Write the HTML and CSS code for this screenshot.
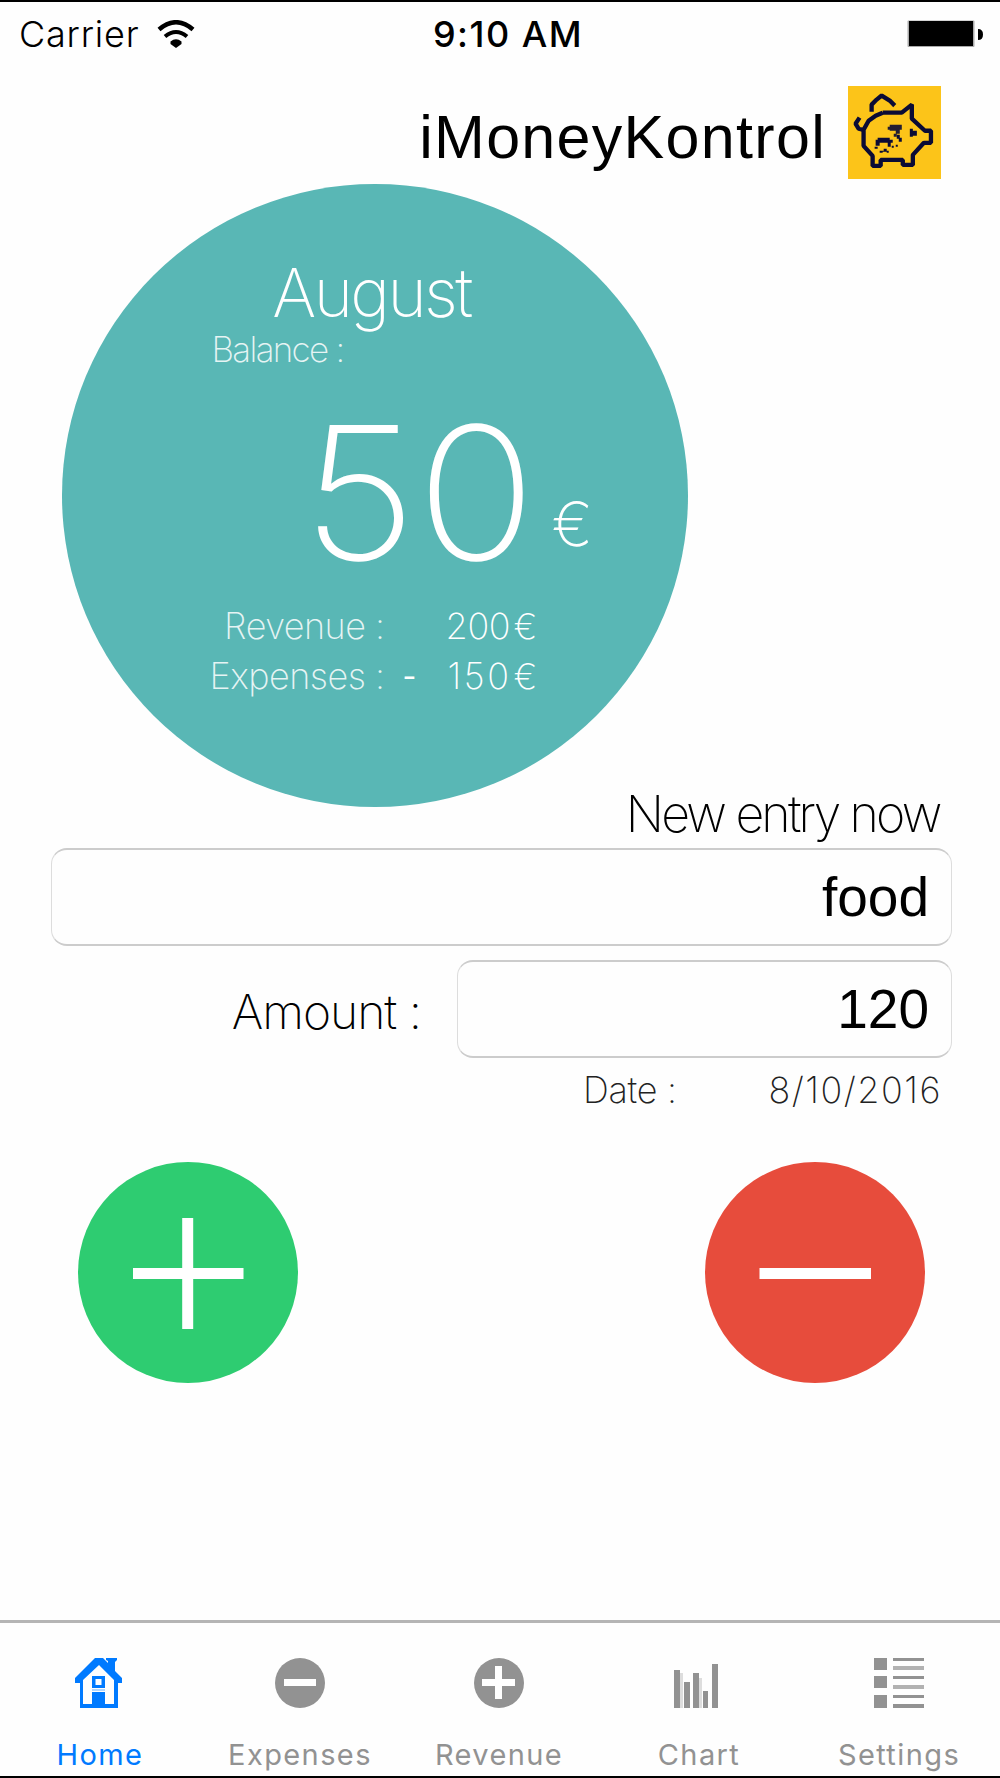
FILE: index.html
```html
<!DOCTYPE html>
<html lang="en">
<head>
<meta charset="utf-8">
<title>iMoneyKontrol</title>
<link rel="stylesheet" href="styles.css">
</head>
<body>
<div class="app">
  <div class="status">
    <div class="status-left">
      <span class="carrier">Carrier</span>
      <svg class="wifi" viewBox="0 0 38 28"><g fill="none" stroke="#000"><path d="M2 9.5Q19-5 36 9.5" stroke-width="4.500"/><path d="M8 16.500Q19 7.500 30 16.500" stroke-width="4"/></g><path d="M13.500 21.500Q19 17 24.500 21.500V24L19 28L13.500 24Z"/></svg>
    </div>
    <span class="time">9:10 AM</span>
    <svg class="battery" viewBox="0 0 76 28"><rect x=".5" y=".5" width="67" height="26.500" rx="1" fill="#aaa"/><rect x="2" y="1" width="64" height="25"/><path d="M71 9q5 0 5 5.500t-5 5.500z"/></svg>
  </div>

  <header class="header">
    <h1 class="title">iMoneyKontrol</h1>
    <svg class="logo" viewBox="8.500 10.500 92.500 92.500">
      <rect x="8.500" y="10.500" width="92.500" height="92.500" fill="#fcc419"/>
      <g fill="none" stroke="#0b0b35" stroke-width="4.300" stroke-linejoin="bevel">
        <path d="M32 36V29L37 24L42 20L50 25L55 30"/>
        <path d="M43 37H62L72 29V43L85 55H91V67H84L73 79V89H63V84H41V90H33V80L24 70V54L29 45L36 40L43 37"/>
        <path d="M23 54L19 53L16 48L20 42"/>
      </g>
      <g fill="#0b0b35">
        <path d="M70 53h3v2h4v5h-4v1h-3z"/>
        <path d="M50 49h12v5h-2v4h-3v3h-3v-3h2v-3h-6v-1h-2v-3h2z" opacity=".9"/>
        <path d="M57 59h3v3h2v4h-3v-3h-2z"/>
        <path d="M38 62h12v2h3v3h-2v4h-3v-4H40v3h-4v-6h2z"/>
        <path d="M35 71h3v2h-3zM44 73h3v2h2v2h-2v-1h-4v1h-3v-2h4zM52 70h2v2h-2zM56 69h2v2h-2z"/>
      </g>
    </svg>
  </header>

  <section class="balance">
    <h2 class="month">August</h2>
    <p class="balance-label">Balance :</p>
    <p class="total"><span class="total-value">50</span><span class="total-unit">€</span></p>
    <div class="line"><span class="line-name">Revenue :</span><span class="sign"></span><span class="line-value">200</span><span class="line-unit">€</span></div>
    <div class="line"><span class="line-name">Expenses :</span><span class="sign">-</span><span class="line-value spaced">150</span><span class="line-unit">€</span></div>
  </section>

  <main class="entry">
    <h3 class="entry-title">New entry now</h3>
    <div class="field">food</div>
    <div class="amount-row">
      <span class="amount-label">Amount :</span>
      <div class="field">120</div>
    </div>
    <div class="date-row"><span class="date-label">Date :</span><span class="date">8/10/2016</span></div>
  </main>

  <div class="actions">
    <svg class="action" viewBox="0 0 220 221"><ellipse cx="110" cy="110.500" rx="110" ry="110.500" fill="#2ecc71"/><path d="M55 111.500H165.500M109.700 56V167" stroke="#fff" stroke-width="11"/></svg>
    <svg class="action" viewBox="0 0 220 221"><ellipse cx="110" cy="110.500" rx="110" ry="110.500" fill="#e74c3c"/><path d="M54.500 111.500H166" stroke="#fff" stroke-width="11"/></svg>
  </div>

  <nav class="tabs">
    <div class="tab active">
      <svg class="icon" viewBox="0 0 50 50"><path d="M20 0h8l5 5V3l-2-1V0h11v2l-2 2v9l7 7v5h-4v25H5V25H0v-5zM24 7L8 22v24h9V34h13v12h9V22z" fill-rule="evenodd"/><path d="M17 18h13v12H17zM20.500 21v6h6v-6z" fill-rule="evenodd"/><path d="M17 31h13v2H17z" opacity=".3"/></svg>
      <span class="tab-name">Home</span>
    </div>
    <div class="tab">
      <svg class="icon" viewBox="0 0 50 50"><circle cx="25" cy="25" r="25"/><path d="M9 21h32v7H9z" fill="#fff"/></svg>
      <span class="tab-name">Expenses</span>
    </div>
    <div class="tab">
      <svg class="icon" viewBox="0 0 50 50"><circle cx="25" cy="25" r="25"/><path d="M8 21h13V8h7v13h13v7H28v13h-7V28H8z" fill="#fff"/></svg>
      <span class="tab-name">Revenue</span>
    </div>
    <div class="tab">
      <svg class="icon" viewBox="0 0 50 50"><path d="M0 12h6v38H0zM10 24h6v26h-6zM19 15h6v35h-6zM29 33h5v17h-5zM38 6h6v44h-6z"/><path d="M6 15h3v35H6zM25 20h3v30h-3z" opacity=".3"/></svg>
      <span class="tab-name">Chart</span>
    </div>
    <div class="tab">
      <svg class="icon" viewBox="0 0 50 50"><path d="M0 0h13v12H0zM0 18h13v12H0zM0 37h13v13H0zM19 0h31v3H19zM19 18h31v3H19zM19 37h31v3H19zM19 46h31v4H19z"/><path d="M19 8h31v4H19zM19 27h31v4H19z" opacity=".7"/></svg>
      <span class="tab-name">Settings</span>
    </div>
  </nav>
</div>
</body>
</html>
```
FILE: styles.css
```css
* { box-sizing: border-box; margin: 0; padding: 0; }
body { background: #fff; }
svg { display: block; flex: none; }
h1, h2, h3 { font-weight: inherit; }

.app {
  width: 1000px;
  height: 1778px;
  display: flex;
  flex-direction: column;
  overflow: hidden;
  border-top: 2px solid #000;
  border-bottom: 2px solid #000;
  background: #fefefe;
  color: #000;
  font-family: Inter, "Liberation Sans", sans-serif;
  white-space: nowrap;
}

.status {
  height: 66px;
  padding: 0 17px 2px 19px;
  display: grid;
  grid-template-columns: 1fr auto 1fr;
  align-items: center;
  font-size: 36px;
}
.status-left { display: flex; align-items: center; gap: 18px; }
.carrier { width: 120px; letter-spacing: .800px; font-weight: 350; }
.wifi { width: 38px; height: 28px; }
.time { font-weight: 500; margin-left: 14px; letter-spacing: 1.500px; }
.battery { width: 76px; height: 28px; justify-self: end; }

.header {
  height: 116px;
  padding: 17.500px 59px 0 0;
  display: flex;
  justify-content: flex-end;
  align-items: flex-start;
  gap: 22px;
}
.title {
  font: 400 61px/102px "Liberation Sans", Arial, sans-serif;
  letter-spacing: 1.300px;
}
.logo { width: 93px; height: 93px; }

.balance {
  width: 626px;
  height: 623px;
  margin-left: 61.500px;
  padding-top: 73px;
  border-radius: 50%;
  background: #59b7b5;
  color: #fff;
  font-weight: 150;
}
.month { padding-right: 6px; font-size: 67px; font-weight: 200; line-height: 72px; letter-spacing: -2.600px; text-align: center; }
.balance-label { padding-left: 150px; font-size: 35px; line-height: 40px; letter-spacing: -1.700px; opacity: .85; }
.total { display: flex; align-items: flex-start; padding-left: 240px; height: 192px; margin-top: 31px; }
.total-value { width: 250px; font-size: 185px; line-height: 186px; font-weight: 200; transform: scaleX(1.07); transform-origin: left; }
.total-unit { padding-top: 91px; font-size: 61px; line-height: 66px; }
.line {
  height: 50px;
  display: grid;
  grid-template-columns: 323px 61px 68px 28px;
  align-items: center;
  font-size: 36px;
}
.total + .line { margin-top: 9px; }
.line-name { text-align: right; letter-spacing: -.500px; opacity: .85; }
.line-value { letter-spacing: -.300px; }
.spaced { padding-left: 2px; letter-spacing: 2.600px; }
.line-unit { font-size: 35px; letter-spacing: -1px; }
.sign { padding-left: 18px; font-weight: 400; font-size: 30px; }

.entry { margin: -19px 48px 0 51px; font-weight: 150; }
.entry-title { height: 60px; padding-right: 12.500px; font-size: 50px; line-height: 52px; letter-spacing: -2.800px; text-align: right; }
.field {
  height: 98px;
  padding-right: 22px;
  border: 2px solid #ccc;
  border-width: 2px 1px;
  border-color: #ccc #ddd;
  border-radius: 16px;
  font: 400 55px/94px "Liberation Sans", Arial, sans-serif;
  text-align: right;
}
.amount-row { display: grid; grid-template-columns: 370px 495px; gap: 36px; margin-top: 14px; line-height: 104px; }
.amount-label { height: 98px; font-size: 48px; letter-spacing: -1px; text-align: right; }
.date-row { display: flex; justify-content: space-between; margin-top: 12px; padding: 0 10px 0 532px; color: #222; font-size: 36px; line-height: 40px; }
.date-label { letter-spacing: -.300px; }
.date { letter-spacing: 1.500px; }

.actions { display: flex; justify-content: space-between; margin-top: 52px; padding: 0 75px 0 77.500px; }
.action { width: 220px; height: 221px; }

.tabs {
  height: 156px;
  margin-top: auto;
  border-top: 3px solid #b5b5b5;
  display: grid;
  grid-template-columns: 200px 199px 200px 200px 201px;
  padding-top: 35px;
  color: #929292;
}
.tab { padding-left: 75px; display: flex; flex-direction: column; }
.active { color: #007aff; }
.icon { width: 50px; height: 50px; fill: currentColor; }
.tab-name { width: 200px; margin: 27px 0 0 -75px; font-size: 29px; line-height: 40px; letter-spacing: 1.400px; text-align: center; }
```
